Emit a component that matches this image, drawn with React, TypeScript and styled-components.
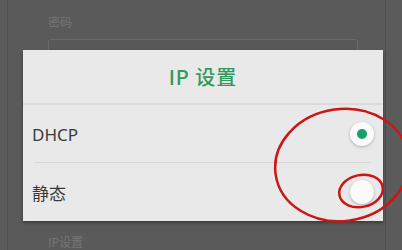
import React from 'react';
import styled, { createGlobalStyle } from 'styled-components';

const Global = createGlobalStyle`
  html, body {
    margin: 0;
    padding: 0;
    background: #5a5a5a;
  }
  body {
    font-family: "Noto Sans", "Noto Sans CJK SC", sans-serif;
  }
`;

const Screen = styled.div`
  position: relative;
  width: 402px;
  height: 250px;
  overflow: hidden;
  background: #5b5b5b;
  display: flex;
`;

const Back = styled.div`
  flex: 1;
  margin: 0 16px 0 7px;
  border-left: 1px solid #4f4f4f;
  border-right: 1px solid #4f4f4f;
  background: #5a5a5a;
  padding: 13px 0 0 40px;
  display: flex;
  flex-direction: column;
`;

const FieldLabel = styled.div<{ $top?: number }>`
  font-family: "Noto Sans CJK SC", sans-serif;
  font-size: 12px;
  color: #767676;
  margin-top: ${p => p.$top ?? 0}px;
`;

const FieldBox = styled.div`
  width: 308px;
  height: 150px;
  margin-top: 9px;
  border: 1px solid #6a6a6a;
  border-radius: 3px;
  background: #585858;
`;

const Dialog = styled.div`
  position: absolute;
  left: 23px;
  top: 50px;
  width: 360px;
  height: 171px;
  background: #e9e9e9;
  box-shadow: 0 2px 3px rgba(0, 0, 0, 0.35);
  display: flex;
  flex-direction: column;
`;

const Title = styled.div`
  height: 53px;
  display: flex;
  align-items: center;
  justify-content: center;
  font-family: "Noto Sans CJK SC", sans-serif;
  font-size: 20px;
  font-weight: 500;
  color: #2f9a5c;
  border-bottom: 2px solid #dadada;
  letter-spacing: 1px;
`;

const Row = styled.div<{ $line?: boolean }>`
  flex: 1;
  display: flex;
  align-items: center;
  justify-content: space-between;
  padding: 0 9px 0 9px;
  position: relative;
  ${p => p.$line && `
    &::after {
      content: '';
      position: absolute;
      left: 12px;
      right: 12px;
      bottom: 0;
      border-bottom: 1px solid #d6d6d6;
    }
  `}
`;

const RowText = styled.span`
  font-family: "Noto Sans", "Noto Sans CJK SC", sans-serif;
  font-size: 17px;
  color: #3a3a3a;
`;

const Radio = styled.span<{ $on?: boolean }>`
  width: 24px;
  height: 24px;
  border-radius: 50%;
  background: #fbfbfb;
  box-shadow: 0 1px 3px rgba(0, 0, 0, 0.25);
  display: flex;
  align-items: center;
  justify-content: center;
  &::after {
    content: '';
    width: 10px;
    height: 10px;
    border-radius: 50%;
    background: ${p => (p.$on ? '#17a06a' : 'transparent')};
  }
`;

const Marks = styled.svg`
  position: absolute;
  left: 0;
  top: 0;
  pointer-events: none;
`;

export default function App() {
  return (
    <Screen>
      <Global />
      <Back>
        <FieldLabel>密码</FieldLabel>
        <FieldBox />
        <FieldLabel $top={44}>IP设置</FieldLabel>
      </Back>
      <Dialog>
        <Title>IP 设置</Title>
        <Row $line>
          <RowText>DHCP</RowText>
          <Radio $on />
        </Row>
        <Row>
          <RowText>静态</RowText>
          <Radio />
        </Row>
      </Dialog>
      <Marks width="402" height="250" viewBox="0 0 402 250">
        <ellipse cx="342" cy="165" rx="67" ry="56" transform="rotate(-8 342 165)" fill="none" stroke="#cc1515" strokeWidth="2.5" />
        <ellipse cx="361" cy="191" rx="22" ry="16" transform="rotate(-12 361 191)" fill="none" stroke="#cc1515" strokeWidth="2.5" />
      </Marks>
    </Screen>
  );
}
